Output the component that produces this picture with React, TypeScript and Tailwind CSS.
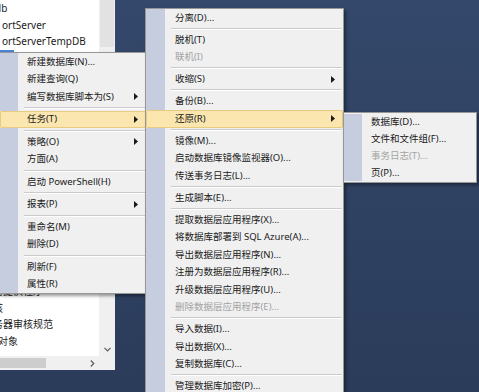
import React from "react";

type Item = { t: string; sub?: boolean; dis?: boolean; hi?: boolean } | "sep";

const m1: Item[] = [
  { t: "新建数据库(N)..." },
  { t: "新建查询(Q)" },
  { t: "编写数据库脚本为(S)", sub: true },
  "sep",
  { t: "任务(T)", sub: true, hi: true },
  "sep",
  { t: "策略(O)", sub: true },
  { t: "方面(A)" },
  "sep",
  { t: "启动 PowerShell(H)" },
  "sep",
  { t: "报表(P)", sub: true },
  "sep",
  { t: "重命名(M)" },
  { t: "删除(D)" },
  "sep",
  { t: "刷新(F)" },
  { t: "属性(R)" },
];

const m2: Item[] = [
  { t: "分离(D)..." },
  "sep",
  { t: "脱机(T)" },
  { t: "联机(I)", dis: true },
  "sep",
  { t: "收缩(S)", sub: true },
  "sep",
  { t: "备份(B)..." },
  { t: "还原(R)", sub: true, hi: true },
  "sep",
  { t: "镜像(M)..." },
  { t: "启动数据库镜像监视器(O)..." },
  { t: "传送事务日志(L)..." },
  "sep",
  { t: "生成脚本(E)..." },
  "sep",
  { t: "提取数据层应用程序(X)..." },
  { t: "将数据库部署到 SQL Azure(A)..." },
  { t: "导出数据层应用程序(N)..." },
  { t: "注册为数据层应用程序(R)..." },
  { t: "升级数据层应用程序(U)..." },
  { t: "删除数据层应用程序(E)...", dis: true },
  "sep",
  { t: "导入数据(I)..." },
  { t: "导出数据(X)..." },
  { t: "复制数据库(C)..." },
  "sep",
  { t: "管理数据库加密(P)..." },
];

const m3: Item[] = [
  { t: "数据库(D)..." },
  { t: "文件和文件组(F)..." },
  { t: "事务日志(T)...", dis: true },
  { t: "页(P)..." },
];

function Arrow() {
  return (
    <svg width="4" height="7" viewBox="0 0 4 7" className="mr-[8px] shrink-0">
      <path d="M0 0 L4 3.5 L0 7 Z" fill="#1a1a1a" />
    </svg>
  );
}

function Menu({
  items,
  className,
  iconW,
  rowH,
  sepH,
  padL,
}: {
  items: Item[];
  className: string;
  iconW: string;
  rowH: string;
  sepH: string;
  padL: string;
}) {
  return (
    <div
      className={`absolute flex flex-col bg-[#f0f0f0] border border-[#979797] shadow-[2px_2px_3px_rgba(0,0,0,0.4)] ${className}`}
    >
      {items.map((it, i) =>
        it === "sep" ? (
          <div key={i} className={`flex ${sepH}`}>
            <div className={`${iconW} shrink-0 bg-[#c6cddf]`} />
            <div className="flex-1 flex items-center pl-[6px] pr-[1px]">
              <div className="w-full border-t border-t-[#cbcbcb] border-b border-b-white" />
            </div>
          </div>
        ) : (
          <div
            key={i}
            className={`flex items-center ${rowH} ${
              it.hi ? "bg-[#fbe6b0] rounded-[2px] shadow-[inset_0_0_0_1px_#e8cb80]" : ""
            }`}
          >
            <div className={`${iconW} self-stretch shrink-0 ${it.hi ? "" : "bg-[#c6cddf]"}`} />
            <span
              className={`${padL} flex-1 whitespace-nowrap leading-[12px] ${
                it.dis ? "text-[#a3a3a3]" : "text-[#1a1a1a]"
              }`}
            >
              {it.t}
            </span>
            {it.sub && <Arrow />}
          </div>
        )
      )}
    </div>
  );
}

type Row = { t: string; cls: string; sel?: boolean };

const rows: Row[] = [
  { t: "db", cls: "ml-[-5px]" },
  { t: "ortServer", cls: "ml-[2px]" },
  { t: "ortServerTempDB", cls: "ml-[2px]" },
  { t: "", cls: "", sel: true },
  { t: "", cls: "" },
  { t: "", cls: "" },
  { t: "", cls: "" },
  { t: "", cls: "" },
  { t: "", cls: "" },
  { t: "", cls: "" },
  { t: "", cls: "" },
  { t: "", cls: "" },
  { t: "", cls: "" },
  { t: "", cls: "" },
  { t: "", cls: "" },
  { t: "", cls: "" },
  { t: "", cls: "" },
  { t: "加密提供程序", cls: "ml-[-17px]" },
  { t: "审核", cls: "ml-[-17px]" },
  { t: "服务器审核规范", cls: "ml-[-17px]" },
  { t: "服务器对象", cls: "ml-[-32px]" },
];

function Tree() {
  return (
    <div className="w-[115px] h-[370px] bg-white flex flex-col">
      <div className="flex flex-1 min-h-0">
        <div className="flex-1 overflow-hidden flex flex-col mt-[-0.3px]">
          {rows.map((r, i) =>
            r.sel ? (
              <div key={i} className="h-[16.65px] shrink-0 flex">
                <div className="w-[14px] h-full bg-[#4a86d6]" />
              </div>
            ) : (
              <div
                key={i}
                className="h-[16.65px] shrink-0 flex items-center whitespace-nowrap text-[10px] leading-[16px] text-[#1a1a1a]"
              >
                {r.t && <span className={r.cls}>{r.t}</span>}
              </div>
            )
          )}
        </div>
        <div className="w-[16px] bg-[#f0f0f0] flex flex-col justify-between">
          <div className="h-[47px] mx-[1px] bg-[#e2e2e2]" />
          <div className="h-[14px] flex items-center justify-center">
            <svg width="7" height="5" viewBox="0 0 7 5">
              <path d="M0.5 0.8 L3.5 3.8 L6.5 0.8" fill="none" stroke="#5a5a5a" strokeWidth="1.2" />
            </svg>
          </div>
        </div>
      </div>
      <div className="h-[14px] flex bg-[#f0f0f0]">
        <div className="w-[99px] flex items-center">
          <div className="w-[46px] h-[10px] bg-[#cdcdcd]" />
          <div className="flex-1" />
          <div className="w-[14px] flex items-center justify-center">
            <svg width="5" height="7" viewBox="0 0 5 7">
              <path d="M0.8 0.5 L3.8 3.5 L0.8 6.5" fill="none" stroke="#5a5a5a" strokeWidth="1.2" />
            </svg>
          </div>
        </div>
        <div className="flex-1" />
      </div>
    </div>
  );
}

export default function App() {
  return (
    <div className="relative w-[479px] h-[392px] overflow-hidden bg-linear-to-b from-[#34486b] to-[#2b3c5a] font-['Noto_Sans','Noto_Sans_CJK_SC',sans-serif] text-[9.5px]">
      <Tree />
      <Menu
        items={m1}
        className="left-[-1px] top-[52px] w-[148px]"
        iconW="w-[18px]"
        rowH="h-[17.5px]"
        sepH="h-[5px]"
        padL="pl-[9px]"
      />
      <Menu
        items={m2}
        className="left-[145px] top-[8px] w-[199px]"
        iconW="w-[19px]"
        rowH="h-[17.5px]"
        sepH="h-[4.5px]"
        padL="pl-[10px]"
      />
      <Menu
        items={m3}
        className="left-[343px] top-[112px] w-[134px] pt-[1px] pb-[1px]"
        iconW="w-[18px]"
        rowH="h-[16.75px]"
        sepH="h-[4.5px]"
        padL="pl-[9px]"
      />
    </div>
  );
}
